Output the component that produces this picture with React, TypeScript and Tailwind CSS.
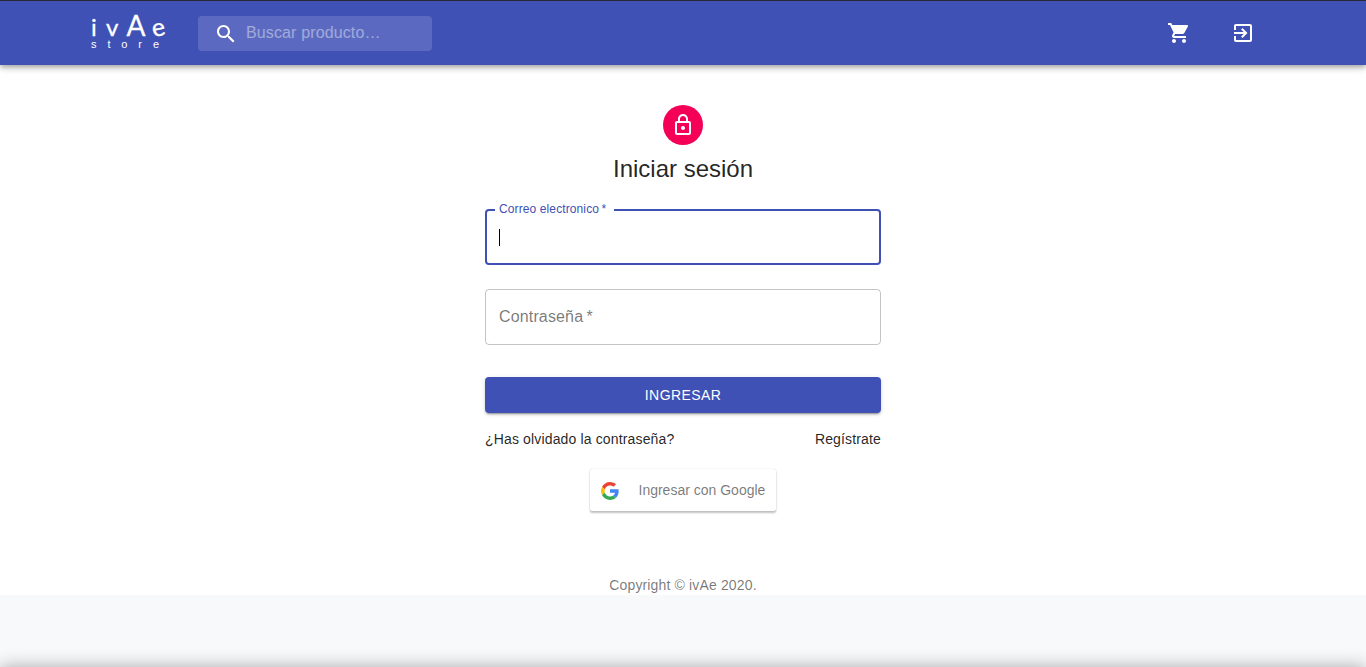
function Icon({ d }: { d: string }) {
  return (
    <svg viewBox="0 0 24 24" className="size-6 shrink-0" fill="currentColor" aria-hidden="true">
      <path d={d} />
    </svg>
  );
}

const icons = {
  search:
    'M15.5 14h-.79l-.28-.27C15.41 12.59 16 11.11 16 9.5 16 5.91 13.09 3 9.5 3S3 5.91 3 9.5 5.91 16 9.5 16c1.61 0 3.09-.59 4.23-1.57l.27.28v.79l5 4.99L20.49 19l-4.99-5zm-6 0C7.01 14 5 11.99 5 9.5S7.01 5 9.5 5 14 7.01 14 9.5 11.99 14 9.5 14z',
  cart: 'M7 18c-1.1 0-1.99.9-1.99 2S5.9 22 7 22s2-.9 2-2-.9-2-2-2zM1 2v2h2l3.6 7.59-1.35 2.45c-.16.28-.25.61-.25.96 0 1.1.9 2 2 2h12v-2H7.42c-.14 0-.25-.11-.25-.25l.03-.12.9-1.63h7.45c.75 0 1.41-.41 1.75-1.03l3.58-6.49c.08-.14.12-.31.12-.48 0-.55-.45-1-1-1H5.21l-.94-2H1zm16 16c-1.1 0-1.99.9-1.99 2s.89 2 1.99 2 2-.9 2-2-.9-2-2-2z',
  login:
    'M10.09 15.59L11.5 17l5-5-5-5-1.41 1.41L12.67 11H3v2h9.67l-2.58 2.59zM19 3H5c-1.11 0-2 .9-2 2v4h2V5h14v14H5v-4H3v4c0 1.1.89 2 2 2h14c1.1 0 2-.9 2-2V5c0-1.1-.9-2-2-2z',
  lock: 'M12 17c1.1 0 2-.9 2-2s-.9-2-2-2-2 .9-2 2 .9 2 2 2zm6-9h-1V6c0-2.76-2.24-5-5-5S7 3.24 7 6v2H6c-1.1 0-2 .9-2 2v10c0 1.1.9 2 2 2h12c1.1 0 2-.9 2-2V10c0-1.1-.9-2-2-2zM8.9 6c0-1.71 1.39-3.1 3.1-3.1s3.1 1.39 3.1 3.1v2H8.9V6zM18 20H6V10h12v10z',
};

function GoogleLogo() {
  return (
    <svg viewBox="0 0 18 18" className="mt-px size-[18px]" fillRule="evenodd" aria-hidden="true">
      <path fill="#EA4335" d="M9 3.48c1.69 0 2.83.73 3.48 1.34l2.54-2.48C13.46.89 11.43 0 9 0 5.48 0 2.44 2.02.96 4.96l2.91 2.26C4.6 5.05 6.62 3.48 9 3.48z" />
      <path fill="#4285F4" d="M17.64 9.2c0-.74-.06-1.28-.19-1.84H9v3.34h4.96c-.1.83-.64 2.08-1.84 2.92l2.84 2.2c1.7-1.57 2.68-3.88 2.68-6.62z" />
      <path fill="#FBBC05" d="M3.88 10.78A5.54 5.54 0 0 1 3.58 9c0-.62.11-1.22.29-1.78L.96 4.96A9.008 9.008 0 0 0 0 9c0 1.45.35 2.82.96 4.04l2.92-2.26z" />
      <path fill="#34A853" d="M9 18c2.43 0 4.47-.8 5.96-2.18l-2.84-2.2c-.76.53-1.78.9-3.12.9-2.38 0-4.4-1.57-5.12-3.74L.97 13.04C2.45 15.98 5.48 18 9 18z" />
    </svg>
  );
}

function Header() {
  return (
    <header className="z-10 flex h-[65px] shrink-0 items-start border-t border-[#282830] bg-[#3f51b5] text-white shadow-[0_2px_4px_-1px_rgba(0,0,0,.2),0_4px_5px_0_rgba(0,0,0,.14),0_1px_10px_0_rgba(0,0,0,.12)]">
      <div className="ml-[91px] w-[107px] pt-[13px]">
        <div className="flex h-[23px] items-baseline font-['Lato',sans-serif] text-[24px] leading-[23px] [-webkit-text-stroke:0.3px_white]">
          <span className="w-[15px]">i</span>
          <span className="w-[20.5px]">v</span>
          <span className="w-[25.5px] text-[28px]">A</span>
          <span className="inline-block origin-[50%_65%] -rotate-12 text-[25px]">e</span>
        </div>
        <div className="pt-px text-[11px] leading-[12px] tracking-[10.9px]">store</div>
      </div>
      <div className="mt-[15px] flex h-[35px] w-[234px] items-center rounded bg-white/15 pl-[16px]">
        <Icon d={icons.search} />
        <input
          placeholder="Buscar producto…"
          className="mb-0.5 ml-2 w-[176px] bg-transparent text-base leading-5 tracking-[0.13px] outline-none placeholder:text-white/42"
        />
      </div>
      <nav className="mt-5 mr-[111px] ml-auto flex gap-10">
        <Icon d={icons.cart} />
        <Icon d={icons.login} />
      </nav>
    </header>
  );
}

function LoginForm() {
  return (
    <form className="mt-6 w-[396px]">
      <div className="relative flex h-14 items-center rounded border-2 border-[#3f51b5] px-3">
        <label className="absolute -top-2.5 left-2 w-[119px] bg-white pl-1 text-[12px] leading-4 tracking-[0.11px] text-[#3f51b5]">
          Correo electronico&thinsp;*
        </label>
        <span className="h-[17px] w-px bg-black" />
      </div>
      <div className="mt-6 flex h-14 items-center rounded border border-black/23 px-[13px] text-base tracking-[0.15px] text-black/54">
        <span>Contraseña&thinsp;*</span>
      </div>
      <button
        type="button"
        className="mt-8 block h-9 w-full rounded bg-[#3f51b5] text-sm tracking-[0.4px] text-white shadow-[0_3px_1px_-2px_rgba(0,0,0,.2),0_2px_2px_0_rgba(0,0,0,.14),0_1px_5px_0_rgba(0,0,0,.12)]"
      >
        INGRESAR
      </button>
      <div className="mt-4 flex justify-between text-sm tracking-[0.15px] text-black/87">
        <a>¿Has olvidado la contraseña?</a>
        <a>Regístrate</a>
      </div>
    </form>
  );
}

export default function App() {
  return (
    <div className="flex h-[667px] flex-col overflow-hidden bg-[#f8f9fb] font-['Liberation_Sans',Arial,sans-serif]">
      <Header />
      <main className="flex h-[530px] shrink-0 flex-col items-center bg-white pt-10">
        <div className="flex size-10 items-center justify-center rounded-full bg-[#f50057] text-white">
          <Icon d={icons.lock} />
        </div>
        <h1 className="mt-2 text-2xl leading-8 text-black/87">Iniciar sesión</h1>
        <LoginForm />
        <button
          type="button"
          className="mt-5 flex h-[42px] w-[186px] items-center rounded-xs bg-white pl-[11px] text-sm text-black/54 shadow-[0_2px_2px_0_rgba(0,0,0,.24),0_0_1px_0_rgba(0,0,0,.24)]"
        >
          <GoogleLogo />
          <span className="ml-[19.5px] whitespace-nowrap">Ingresar con Google</span>
        </button>
        <p className="mt-auto text-sm tracking-[0.15px] text-black/54">Copyright © ivAe 2020.</p>
      </main>
      <div className="h-[72px] shrink-0" />
      <div className="h-10 shrink-0 shadow-[0_0_18px_0_rgba(0,0,0,.32)]" />
    </div>
  );
}
